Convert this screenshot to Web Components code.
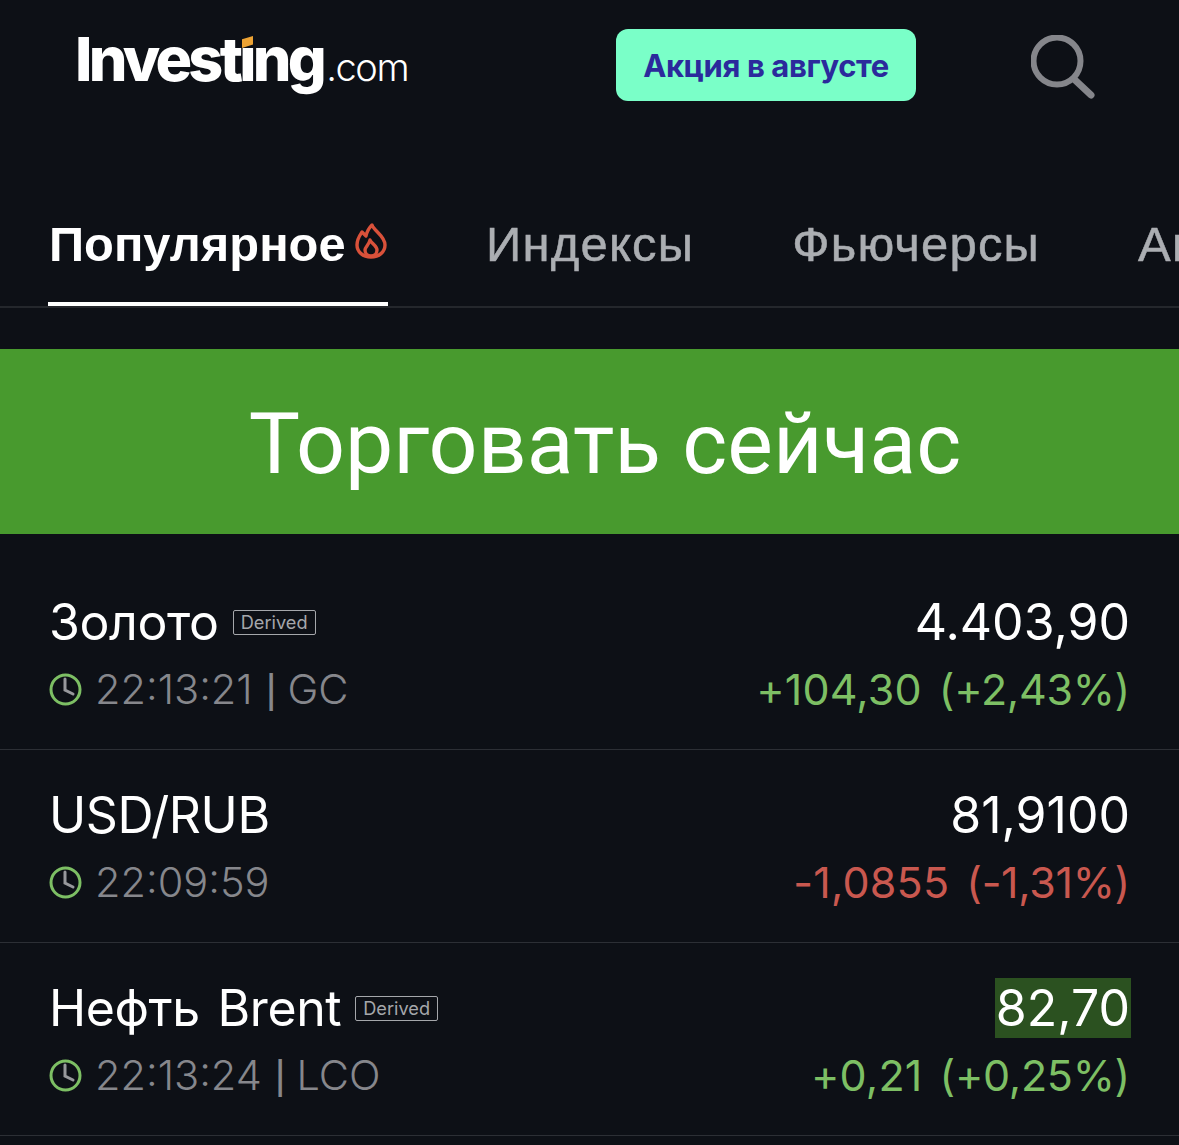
<!DOCTYPE html>
<html lang="ru">
<head>
<meta charset="utf-8">
<title>Investing.com</title>
<style>
  html, body { margin: 0; background: #0d1016; }
  body { width: 1179px; height: 1145px; overflow: hidden; font-family: Inter, "Liberation Sans", sans-serif; }
</style>
</head>
<body>
<top-bar></top-bar>
<tab-strip></tab-strip>
<trade-banner>Торговать сейчас</trade-banner>
<quote-list>
  <quote-row name="Золото" derived time="22:13:21" code="GC" price="4.403,90" change="+104,30" percent="(+2,43%)" dir="up"></quote-row>
  <quote-row name="USD/RUB" time="22:09:59" price="81,9100" change="-1,0855" percent="(-1,31%)" dir="down"></quote-row>
  <quote-row name="Нефть Brent" derived time="22:13:24" code="LCO" price="82,70" change="+0,21" percent="(+0,25%)" dir="up" flash></quote-row>
</quote-list>

<script>
class TopBar extends HTMLElement {
    constructor() {
        super();
        this.attachShadow({ mode: 'open' });
    }

    connectedCallback() {
        this.shadowRoot.innerHTML = `
            <style>
                :host { display: flex; align-items: flex-start; height: 130px; box-sizing: border-box; padding: 29px 0 0 75px; }
                .logo { position: relative; display: flex; align-items: baseline; width: 541px; height: 72px; color: #fff; white-space: nowrap; }
                .brand { font: 800 61px/61px Inter, sans-serif; letter-spacing: -3.7px; }
                .tld { font: 300 38px/61px Inter, sans-serif; letter-spacing: -1.4px; margin-left: 3px; }
                /* covers the font's round i-dot, the logo's is a slanted orange block */
                .dot { position: absolute; left: 165px; top: 5px; width: 15px; height: 14px; background: #0d1016; }
                .dot::after { content: ''; position: absolute; left: 2px; top: 2px; width: 11px; height: 12px; background: #eda334; clip-path: polygon(0 28%, 100% 0, 100% 70%, 0 100%); }
                .promo { width: 300px; height: 72px; border-radius: 12px; background: #7affc8; color: #2b2a9c; font: 700 31px/74px Inter, sans-serif; letter-spacing: -0.4px; text-align: center; }
                svg { display: block; margin: 6px 0 0 115px; }
            </style>
            <div class="logo"><span class="brand">Investing</span><span class="tld">.com</span><span class="dot"></span></div>
            <div class="promo">Акция в августе</div>
            <svg width="66" height="66" viewBox="0 0 66 66" fill="none" stroke="#85868b" stroke-linecap="round">
                <circle cx="26" cy="26" r="23.5" stroke-width="6"/>
                <path d="M44 45 L60 60" stroke-width="7"/>
            </svg>
        `;
    }
}

class TabStrip extends HTMLElement {
    constructor() {
        super();
        this.attachShadow({ mode: 'open' });
    }

    connectedCallback() {
        this.shadowRoot.innerHTML = `
            <style>
                :host { display: flex; height: 178px; box-sizing: border-box; padding: 0 0 0 48px; border-bottom: 2px solid #24272c; overflow: hidden; white-space: nowrap; font: 400 49px/1 "Liberation Sans", sans-serif; letter-spacing: 1.2px; -webkit-text-stroke: 0.5px currentColor; color: #abaeb2; gap: 98px; align-items: flex-end; }
                .tab { flex: none; height: 118px; box-sizing: border-box; padding-top: 32px; }
                .active { width: 340px; margin-bottom: -2px; height: 120px; padding-left: 1px; border-bottom: 6px solid #fff; color: #fff; font: 700 48.8px/1 "Liberation Sans", sans-serif; letter-spacing: 0; -webkit-text-stroke: 0; display: flex; align-items: flex-start; gap: 9px; }
                .active svg { margin-top: 3px; }
            </style>
            <div class="tab active">Популярное
                <svg width="32" height="36" viewBox="0 0 32 36" fill="none" stroke="#d9513a" stroke-width="3.4" stroke-linejoin="round">
                    <path d="M17 2 C19 8 30 13 30 22 C30 29 24 34 16 34 C8 34 2 29 2 22 C2 16 5 12 7 9 L11 13 C12 8 14 5 17 2 Z"/>
                    <path d="M15 17 C16 20 22 23 22 27 C22 31 19 33 16 33 C13 33 10 31 10 27 C10 24 14 22 15 17 Z"/>
                </svg>
            </div>
            <div class="tab">Индексы</div>
            <div class="tab">Фьючерсы</div>
            <div class="tab">Акции</div>
        `;
    }
}

class TradeBanner extends HTMLElement {
    constructor() {
        super();
        this.attachShadow({ mode: 'open' });
        this.shadowRoot.innerHTML = `
            <style>
                :host { display: flex; justify-content: center; align-items: center; height: 185px; margin-top: 41px; padding: 4px 0 0 31px; box-sizing: border-box; background: #489a2e; color: #fff; font: 400 86px/1 Roboto, sans-serif; }
            </style>
            <slot></slot>
        `;
    }
}

class QuoteList extends HTMLElement {
    constructor() {
        super();
        this.attachShadow({ mode: 'open' });
        this.shadowRoot.innerHTML = `
            <style>
                :host { display: block; padding-top: 23px; }
            </style>
            <slot></slot>
        `;
    }
}

class QuoteRow extends HTMLElement {
    constructor() {
        super();
        this.attachShadow({ mode: 'open' });
    }

    connectedCallback() {
        const dir = this.getAttribute('dir');
        const code = this.getAttribute('code');
        const derived = this.hasAttribute('derived') ? '<span class="tag">Derived</span>' : '';
        const flash = this.hasAttribute('flash') ? ' flash' : '';
        const suffix = code ? `<span class="sep">|</span><span>${code}</span>` : '';

        this.shadowRoot.innerHTML = `
            <style>
                :host { display: block; height: 193px; box-sizing: border-box; padding: 35px 49px 0; border-bottom: 1px solid #2c2f35; font-family: Inter, sans-serif; }
                .line { display: flex; justify-content: space-between; align-items: center; white-space: nowrap; }
                .top { height: 60px; font-size: 50px; color: #fff; }
                .bottom { height: 60px; margin-top: 7px; font-size: 43px; }
                .name { display: flex; align-items: center; gap: 14px; letter-spacing: -0.4px; word-spacing: 4px; }
                .tag { font-size: 18.2px; line-height: 23px; padding: 0 7px; border: 1px solid #a5a7ab; color: #a5a7ab; border-radius: 2px; letter-spacing: 0; }
                .flash { background: #2b5120; margin-right: -1px; padding: 0 1px; line-height: 60px; }
                .time { display: flex; align-items: center; gap: 13px; color: #86878c; font-weight: 300; font-size: 41.5px; }
                .sep { font: 300 41.5px/1 "Liberation Sans", sans-serif; margin-right: -2px; }
                .up { color: #7dbf64; }
                .down { color: #c9584f; }
                .change { display: flex; gap: 17px; letter-spacing: 0.2px; }
                .pct { letter-spacing: -0.3px; }
            </style>
            <div class="line top">
                <span class="name">${this.getAttribute('name')}${derived}</span>
                <span class="price${flash}">${this.getAttribute('price')}</span>
            </div>
            <div class="line bottom">
                <span class="time">
                    <svg width="33" height="33" viewBox="0 0 33 33" fill="none" stroke="#7dbf64" stroke-width="3" stroke-linecap="round">
                        <circle cx="16.5" cy="16.5" r="14.5" />
                        <path d="M16 6 V17 L24 21" stroke="#97989c"/>
                    </svg>
                    <span>${this.getAttribute('time')}</span>${suffix}
                </span>
                <span class="change ${dir}"><span>${this.getAttribute('change')}</span><span class="pct">${this.getAttribute('percent')}</span></span>
            </div>
        `;
    }
}

customElements.define('top-bar', TopBar);
customElements.define('tab-strip', TabStrip);
customElements.define('trade-banner', TradeBanner);
customElements.define('quote-list', QuoteList);
customElements.define('quote-row', QuoteRow);
</script>
</body>
</html>
